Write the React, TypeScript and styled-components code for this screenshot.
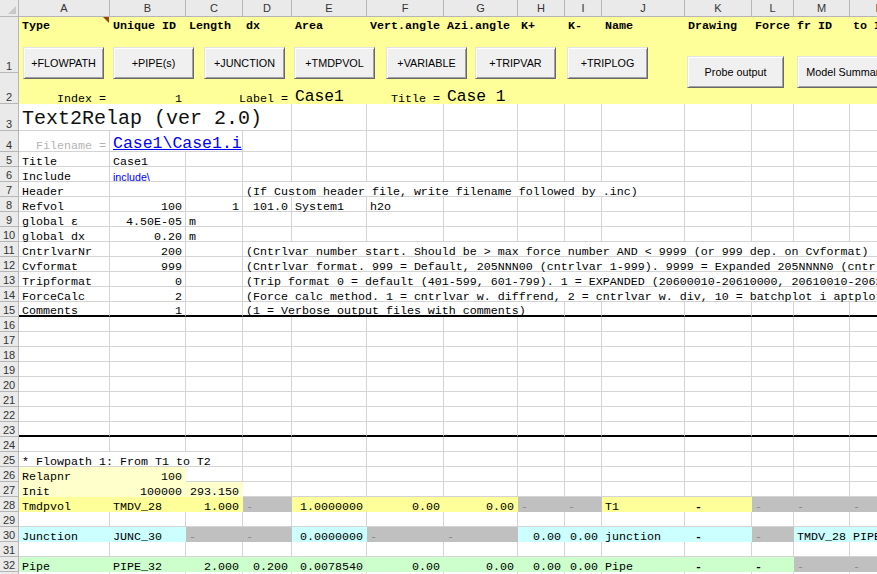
import React from 'react';
import styled, { createGlobalStyle } from 'styled-components';

const COLS = [91, 76, 57, 49, 75, 77, 74, 47, 37, 83, 67, 42, 56, 60];
const LETTERS = 'ABCDEFGHIJKLMN'.split('');
const TEMPLATE = `19px ${COLS.map((w) => `${w}px`).join(' ')}`;

const YELLOW = '#ffff99';
const PALE = '#ffffcc';
const GREY = '#c0c0c0';
const CYAN = '#ccffff';
const GREEN = '#ccffcc';
const GRID = '#d4d4d4';
const HEAD_BG = '#eaeaea';
const HEAD_LINE = '#b6b6b6';

const GlobalStyle = createGlobalStyle`
  html, body {
    margin: 0;
    padding: 0;
    background: #fff;
    overflow: hidden;
  }
`;

const Sheet = styled.div`
  position: relative;
  width: 877px;
  height: 574px;
  overflow: hidden;
  background: #fff;
`;

const Grid = styled.div`
  width: 910px;
  display: flex;
  flex-direction: column;
`;

const Row = styled.div<{ $h: number }>`
  display: grid;
  grid-template-columns: ${TEMPLATE};
  height: ${({ $h }) => $h}px;
`;

const Corner = styled.div`
  position: relative;
  box-sizing: border-box;
  background: ${HEAD_BG};
  border-right: 1px solid ${HEAD_LINE};
  border-bottom: 1px solid ${HEAD_LINE};

  &::after {
    content: '';
    position: absolute;
    right: 2px;
    bottom: 2px;
    border-style: solid;
    border-width: 0 0 8px 8px;
    border-color: transparent transparent #c8c8c8 transparent;
  }
`;

const ColHead = styled.div`
  box-sizing: border-box;
  background: ${HEAD_BG};
  border-right: 1px solid ${HEAD_LINE};
  border-bottom: 1px solid ${HEAD_LINE};
  display: flex;
  align-items: center;
  justify-content: center;
  font-family: 'Liberation Sans', Arial, sans-serif;
  font-size: 11px;
  color: #333;
`;

const RowHead = styled.div`
  box-sizing: border-box;
  background: ${HEAD_BG};
  border-right: 1px solid ${HEAD_LINE};
  border-bottom: 1px solid ${HEAD_LINE};
  display: flex;
  align-items: flex-end;
  justify-content: center;
  padding-bottom: 0;
  font-family: 'Liberation Sans', Arial, sans-serif;
  font-size: 11px;
  line-height: 12px;
  color: #333;
`;

const Cell = styled.div<{
  $span: number;
  $bg?: string;
  $right?: boolean;
  $top?: boolean;
  $thick?: boolean;
  $bold?: boolean;
}>`
  position: relative;
  grid-column: span ${({ $span }) => $span};
  box-sizing: border-box;
  min-width: 0;
  display: flex;
  align-items: ${({ $top }) => ($top ? 'flex-start' : 'flex-end')};
  justify-content: ${({ $right }) => ($right ? 'flex-end' : 'flex-start')};
  padding: ${({ $top }) => ($top ? '6px 3px 0' : '0 3px')};
  background: ${({ $bg }) => $bg ?? '#fff'};
  border-right: 1px solid ${({ $bg }) => $bg ?? GRID};
  border-bottom: ${({ $thick, $bg }) => ($thick ? '2px solid #000' : `1px solid ${$bg ?? GRID}`)};
  white-space: pre;
  font-family: 'Liberation Mono', 'Courier New', monospace;
  font-size: 11.67px;
  font-weight: ${({ $bold }) => ($bold ? 700 : 400)};
  line-height: 7px;
  color: #000;
`;

const Comment = styled.span`
  position: absolute;
  top: 0;
  right: 0;
  border-style: solid;
  border-width: 0 6px 6px 0;
  border-color: transparent #a0400f transparent transparent;
`;

const TitleText = styled.span`
  font-size: 20px;
  line-height: 20px;
  padding-bottom: 1px;
  color: #111;
`;

const BigText = styled.span`
  font-size: 16.3px;
  line-height: 12px;
`;

const FileLink = styled.span`
  font-size: 16.5px;
  line-height: 14px;
  color: #0000ff;
  text-decoration: underline;
`;

const IncludeLink = styled.span`
  font-family: 'Liberation Sans', Arial, sans-serif;
  font-size: 10.7px;
  color: #0000ff;
  text-decoration: underline;
`;

const Muted = styled.span`
  color: #b4b4b4;
  line-height: 9px;
`;

const GreyDash = styled.span`
  color: #8c8c8c;
`;

const Dash = styled.span`
  font-weight: 700;
`;

const Overlay = styled.div`
  position: absolute;
  inset: 0;
  pointer-events: none;
`;

const SheetButton = styled.div<{ $x: number; $y: number; $w: number }>`
  position: absolute;
  left: ${({ $x }) => $x}px;
  top: ${({ $y }) => $y}px;
  width: ${({ $w }) => $w}px;
  height: 32px;
  box-sizing: border-box;
  display: flex;
  align-items: center;
  justify-content: center;
  background: #f0f0f0;
  border: 1px solid;
  border-color: #e3e3e3 #696969 #696969 #e3e3e3;
  box-shadow: inset 1px 1px 0 #fff, inset -1px -1px 0 #a0a0a0;
  font-family: 'Liberation Sans', Arial, sans-serif;
  font-size: 10.8px;
  color: #000;
  white-space: nowrap;
`;

type CellDef = {
  col: number;
  span?: number;
  text?: React.ReactNode;
  right?: boolean;
  bg?: string;
  marker?: boolean;
};

type RowDef = {
  n: number;
  h: number;
  bg?: string;
  top?: boolean;
  bold?: boolean;
  thick?: boolean;
  cells: CellDef[];
};

const grey = (col: number): CellDef => ({ col, bg: GREY, text: <GreyDash>-</GreyDash> });

const tc = (col: number, text: React.ReactNode, bg?: string): CellDef => ({ col, text, bg });
const nc = (col: number, text: React.ReactNode, bg?: string): CellDef => ({ col, text, bg, right: true });

const rows: RowDef[] = [
  {
    n: 1,
    h: 56,
    bg: YELLOW,
    top: true,
    bold: true,
    cells: [
      { col: 0, text: 'Type', marker: true },
      tc(1, 'Unique ID'),
      tc(2, 'Length'),
      tc(3, 'dx'),
      tc(4, 'Area'),
      tc(5, 'Vert.angle'),
      tc(6, 'Azi.angle'),
      tc(7, 'K+'),
      tc(8, 'K-'),
      tc(9, 'Name'),
      tc(10, 'Drawing'),
      tc(11, 'Force'),
      tc(12, 'fr ID'),
      tc(13, 'to ID'),
    ],
  },
  {
    n: 2,
    h: 31,
    bg: YELLOW,
    cells: [
      nc(0, 'Index ='),
      nc(1, '1'),
      nc(3, 'Label ='),
      tc(4, <BigText>Case1</BigText>),
      nc(5, 'Title ='),
      tc(6, <BigText>Case 1</BigText>),
    ],
  },
  { n: 3, h: 27, cells: [{ col: 0, span: 4, text: <TitleText>Text2Relap (ver 2.0)</TitleText> }] },
  {
    n: 4,
    h: 21,
    cells: [
      nc(0, <Muted>Filename =</Muted>),
      { col: 1, span: 2, text: <FileLink>Case1\Case1.i</FileLink> },
    ],
  },
  { n: 5, h: 15, cells: [tc(0, 'Title'), tc(1, 'Case1')] },
  { n: 6, h: 15, cells: [tc(0, 'Include'), tc(1, <IncludeLink>include\</IncludeLink>)] },
  {
    n: 7,
    h: 15,
    cells: [tc(0, 'Header'), { col: 3, span: 7, text: '(If Custom header file, write filename followed by .inc)' }],
  },
  {
    n: 8,
    h: 15,
    cells: [tc(0, 'Refvol'), nc(1, '100'), nc(2, '1'), nc(3, '101.0'), tc(4, 'System1'), tc(5, 'h2o')],
  },
  { n: 9, h: 15, cells: [tc(0, 'global ε'), nc(1, '4.50E-05'), tc(2, 'm')] },
  { n: 10, h: 15, cells: [tc(0, 'global dx'), nc(1, '0.20'), tc(2, 'm')] },
  {
    n: 11,
    h: 15,
    cells: [
      tc(0, 'CntrlvarNr'),
      nc(1, '200'),
      { col: 3, span: 11, text: '(Cntrlvar number start. Should be > max force number AND < 9999 (or 999 dep. on Cvformat)' },
    ],
  },
  {
    n: 12,
    h: 15,
    cells: [
      tc(0, 'Cvformat'),
      nc(1, '999'),
      {
        col: 3,
        span: 11,
        text: '(Cntrlvar format. 999 = Default, 205NNN00 (cntrlvar 1-999). 9999 = Expanded 205NNNN0 (cntrlvar 1-9999))',
      },
    ],
  },
  {
    n: 13,
    h: 15,
    cells: [
      tc(0, 'Tripformat'),
      nc(1, '0'),
      {
        col: 3,
        span: 11,
        text: '(Trip format 0 = default (401-599, 601-799). 1 = EXPANDED (20600010-20610000, 20610010-20620000))',
      },
    ],
  },
  {
    n: 14,
    h: 15,
    cells: [
      tc(0, 'ForceCalc'),
      nc(1, '2'),
      {
        col: 3,
        span: 11,
        text: '(Force calc method. 1 = cntrlvar w. diffrend, 2 = cntrlvar w. div, 10 = batchplot i aptplot)',
      },
    ],
  },
  {
    n: 15,
    h: 15,
    thick: true,
    cells: [tc(0, 'Comments'), nc(1, '1'), { col: 3, span: 5, text: '(1 = Verbose output files with comments)' }],
  },
  { n: 16, h: 15, cells: [] },
  { n: 17, h: 15, cells: [] },
  { n: 18, h: 15, cells: [] },
  { n: 19, h: 15, cells: [] },
  { n: 20, h: 15, cells: [] },
  { n: 21, h: 15, cells: [] },
  { n: 22, h: 15, cells: [] },
  { n: 23, h: 15, thick: true, cells: [] },
  { n: 24, h: 15, cells: [] },
  { n: 25, h: 15, cells: [{ col: 0, span: 3, text: '* Flowpath 1: From T1 to T2' }] },
  { n: 26, h: 15, cells: [tc(0, 'Relapnr', PALE), nc(1, '100', PALE)] },
  { n: 27, h: 15, cells: [tc(0, 'Init', PALE), nc(1, '100000', PALE), nc(2, '293.150', PALE)] },
  {
    n: 28,
    h: 15,
    cells: [
      tc(0, 'Tmdpvol', YELLOW),
      tc(1, 'TMDV_28', YELLOW),
      nc(2, '1.000', YELLOW),
      grey(3),
      nc(4, '1.0000000', YELLOW),
      nc(5, '0.00', YELLOW),
      nc(6, '0.00', YELLOW),
      grey(7),
      grey(8),
      tc(9, 'T1', YELLOW),
      tc(10, <Dash> -</Dash>, YELLOW),
      grey(11),
      grey(12),
      grey(13),
    ],
  },
  { n: 29, h: 15, cells: [] },
  {
    n: 30,
    h: 15,
    cells: [
      tc(0, 'Junction', CYAN),
      tc(1, 'JUNC_30', CYAN),
      grey(2),
      grey(3),
      nc(4, '0.0000000', CYAN),
      grey(5),
      grey(6),
      nc(7, '0.00', CYAN),
      nc(8, '0.00', CYAN),
      tc(9, 'junction', CYAN),
      tc(10, <Dash> -</Dash>, CYAN),
      grey(11),
      tc(12, 'TMDV_28', CYAN),
      tc(13, 'PIPE_32', CYAN),
    ],
  },
  { n: 31, h: 15, cells: [] },
  {
    n: 32,
    h: 15,
    cells: [
      tc(0, 'Pipe', GREEN),
      tc(1, 'PIPE_32', GREEN),
      nc(2, '2.000', GREEN),
      nc(3, '0.200', GREEN),
      nc(4, '0.0078540', GREEN),
      nc(5, '0.00', GREEN),
      nc(6, '0.00', GREEN),
      nc(7, '0.00', GREEN),
      nc(8, '0.00', GREEN),
      tc(9, 'Pipe', GREEN),
      tc(10, <Dash> -</Dash>, GREEN),
      tc(11, <Dash>-</Dash>, GREEN),
      grey(12),
      grey(13),
    ],
  },
  { n: 33, h: 15, cells: [] },
];

const buttons = [
  { label: '+FLOWPATH', x: 23, y: 47, w: 81 },
  { label: '+PIPE(s)', x: 113, y: 47, w: 81 },
  { label: '+JUNCTION', x: 204, y: 47, w: 81 },
  { label: '+TMDPVOL', x: 294, y: 47, w: 81 },
  { label: '+VARIABLE', x: 386, y: 47, w: 81 },
  { label: '+TRIPVAR', x: 475, y: 47, w: 81 },
  { label: '+TRIPLOG', x: 567, y: 47, w: 81 },
  { label: 'Probe  output', x: 687, y: 56, w: 97 },
  { label: 'Model  Summary', x: 797, y: 56, w: 97 },
];

function SheetRow({ def }: { def: RowDef }) {
  const out: React.ReactNode[] = [];
  let col = 0;
  while (col < COLS.length) {
    const cell = def.cells.find((c) => c.col === col);
    const span = cell?.span ?? 1;
    out.push(
      <Cell
        key={col}
        $span={span}
        $bg={cell?.bg ?? def.bg}
        $right={cell?.right}
        $top={def.top}
        $thick={def.thick}
        $bold={def.bold}
      >
        {cell?.text}
        {cell?.marker && <Comment />}
      </Cell>
    );
    col += span;
  }
  return (
    <Row $h={def.h}>
      <RowHead>{def.n}</RowHead>
      {out}
    </Row>
  );
}

export default function App() {
  return (
    <Sheet>
      <GlobalStyle />
      <Grid>
        <Row $h={17}>
          <Corner />
          {LETTERS.map((l) => (
            <ColHead key={l}>{l}</ColHead>
          ))}
        </Row>
        {rows.map((r) => (
          <SheetRow key={r.n} def={r} />
        ))}
      </Grid>
      <Overlay>
        {buttons.map((b) => (
          <SheetButton key={b.label} $x={b.x} $y={b.y} $w={b.w}>
            {b.label}
          </SheetButton>
        ))}
      </Overlay>
    </Sheet>
  );
}
